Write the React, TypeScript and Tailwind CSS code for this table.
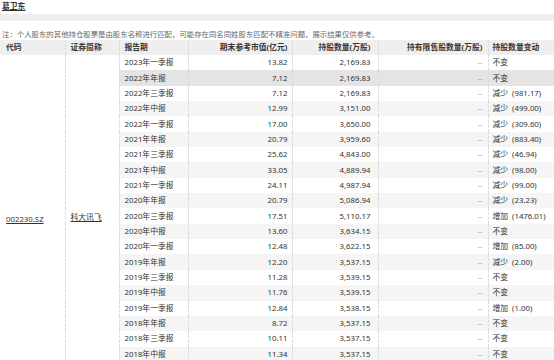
const rows: [string, string, string, string, string][] = [
  ["2023年一季报", "13.82", "2,169.83", "--", "不变"],
  ["2022年年报", "7.12", "2,169.83", "--", "不变"],
  ["2022年三季报", "7.12", "2,169.83", "--", "减少 (981.17)"],
  ["2022年中报", "12.99", "3,151.00", "--", "减少 (499.00)"],
  ["2022年一季报", "17.00", "3,650.00", "--", "减少 (309.60)"],
  ["2021年年报", "20.79", "3,959.60", "--", "减少 (883.40)"],
  ["2021年三季报", "25.62", "4,843.00", "--", "减少 (46.94)"],
  ["2021年中报", "33.05", "4,889.94", "--", "减少 (98.00)"],
  ["2021年一季报", "24.11", "4,987.94", "--", "减少 (99.00)"],
  ["2020年年报", "20.79", "5,086.94", "--", "减少 (23.23)"],
  ["2020年三季报", "17.51", "5,110.17", "--", "增加 (1476.01)"],
  ["2020年中报", "13.60", "3,634.15", "--", "不变"],
  ["2020年一季报", "12.48", "3,622.15", "--", "增加 (85.00)"],
  ["2019年年报", "12.20", "3,537.15", "--", "减少 (2.00)"],
  ["2019年三季报", "11.28", "3,539.15", "--", "不变"],
  ["2019年中报", "11.76", "3,539.15", "--", "不变"],
  ["2019年一季报", "12.84", "3,538.15", "--", "增加 (1.00)"],
  ["2018年年报", "8.72", "3,537.15", "--", "不变"],
  ["2018年三季报", "10.11", "3,537.15", "--", "不变"],
  ["2018年中报", "11.34", "3,537.15", "--", "不变"],
  ["2018年一季报", "10.02", "3,537.15", "--", "不变"],
];

const cell = "border-l border-dashed border-[#dcdcdc] p-0";

// "减少 (981.17)" -> label with a wider gap before the amount
function Change({ text }: { text: string }) {
  const [label, amount] = text.split(" ");
  return (
    <>
      {label}
      {amount && <span className="ml-[4px]">{amount}</span>}
    </>
  );
}

export default function App() {
  return (
    <div className="w-[554px] overflow-hidden bg-white text-[7.8px] text-[#333] font-['Noto_Sans','Noto_Sans_CJK_SC',sans-serif]">
      {/* Holder name */}
      <div className="h-[14px] pl-[2px] pt-[1px] leading-[11px]">
        <span className="font-bold underline underline-offset-[1px]">葛卫东</span>
      </div>
      <div className="h-[7px] bg-[#eeeeee]" />

      <div className="h-[19px] pl-[2px] pt-[8px] leading-[10px] text-[7.4px] text-[#666]">
        注：个人股东的其他持仓股票是由股东名称进行匹配，可能存在同名同姓股东匹配不精准问题，展示结果仅供参考。
      </div>

      <table className="w-full table-fixed border-collapse">
        <colgroup>
          <col className="w-[65px]" />
          <col className="w-[54px]" />
          <col className="w-[69px]" />
          <col className="w-[104px]" />
          <col className="w-[86px]" />
          <col className="w-[110px]" />
          <col className="w-[66px]" />
        </colgroup>
        <thead>
          <tr className="h-[15px] bg-[#efefef] font-bold leading-[15px]">
            <th className="p-0 pl-[6px] text-left font-bold">代码</th>
            <th className={`${cell} pl-[5px] text-left font-bold`}>证券简称</th>
            <th className={`${cell} pl-[5px] text-left font-bold`}>报告期</th>
            <th className={`${cell} pr-[4px] text-right font-bold`}>期末参考市值(亿元)</th>
            <th className={`${cell} pr-[7px] text-right font-bold`}>持股数量(万股)</th>
            <th className={`${cell} pr-[5px] text-right font-bold`}>持有限售股数量(万股)</th>
            <th className={`${cell} pl-[4px] text-left font-bold`}>持股数量变动</th>
          </tr>
        </thead>
        <tbody>
          {rows.map((r, i) => (
            <tr
              key={r[0]}
              className={`h-[15.35px] leading-[15px] ${
                i === 1 ? "bg-[#e4e4e4]" : i % 2 === 1 ? "bg-[#f5f5f5]" : "bg-white"
              }`}
            >
              {i === 0 && (
                <>
                  <td rowSpan={rows.length} className="bg-white p-0 pl-[6px] pt-[6px] align-middle">
                    <span className="underline underline-offset-[1px]">002230.SZ</span>
                  </td>
                  <td rowSpan={rows.length} className={`${cell} bg-white pl-[5px] pt-[2px] align-middle`}>
                    <span className="underline underline-offset-[1px]">科大讯飞</span>
                  </td>
                </>
              )}
              <td className={`${cell} pl-[5px]`}>{r[0]}</td>
              <td className={`${cell} pr-[4px] text-right`}>{r[1]}</td>
              <td className={`${cell} pr-[7px] text-right`}>{r[2]}</td>
              <td className={`${cell} pr-[5px] text-right text-[#999]`}>{r[3]}</td>
              <td className={`${cell} pl-[4px]`}>
                <Change text={r[4]} />
              </td>
            </tr>
          ))}
        </tbody>
      </table>
    </div>
  );
}
